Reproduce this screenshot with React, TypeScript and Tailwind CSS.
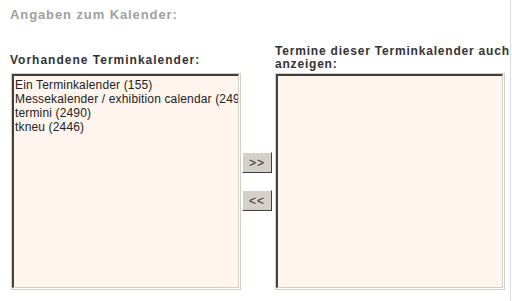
import React from "react";

const font = { fontFamily: '"Liberation Sans", Arial, sans-serif' };

function ListBox({ items }: { items: string[] }) {
  return (
    <div className="h-[217px] w-[230px] border border-[#d4d0c8] bg-white pb-px pr-px">
      <div className="h-full w-full overflow-hidden border-l-2 border-t-2 border-b border-r border-l-[#404040] border-t-[#404040] border-b-[#d4d0c8] border-r-[#d4d0c8] bg-[#fff5ee] pl-px pt-[2px] text-[12px] leading-[14px] tracking-[0.15px] text-[#222]">
        {items.map((t) => (
          <div key={t} className="whitespace-nowrap">
            {t}
          </div>
        ))}
      </div>
    </div>
  );
}

function Btn({ label }: { label: string }) {
  return (
    <div className="flex h-[21px] w-[30px] items-center justify-center border border-t-white border-l-white border-b-[#404040] border-r-[#404040] bg-[#d4d0c8] text-[12px] leading-none tracking-[1px] text-[#333]">
      {label}
    </div>
  );
}

export default function App() {
  return (
    <div className="h-[301px] w-[512px] bg-white" style={font}>
      <div className="h-[301px] w-[511px] overflow-hidden border-r border-[#dcdce6]">
        <div className="pl-[10px] pt-[7px] text-[13px] font-bold leading-[16px] tracking-[0.9px] text-[#a0a0a0]">
          Angaben zum Kalender:
        </div>
        <div className="mt-[5px] flex">
          <div className="flex w-[241px] flex-col">
            <div className="flex h-[45px] items-end pb-[6px] pl-[10px] text-[12px] font-bold leading-[14px] tracking-[1px] text-[#333]">
              Vorhandene Terminkalender:
            </div>
            <div className="pl-[11px]">
              <ListBox
                items={[
                  "Ein Terminkalender (155)",
                  "Messekalender / exhibition calendar (2490)",
                  "termini (2490)",
                  "tkneu (2446)",
                ]}
              />
            </div>
          </div>
          <div className="flex w-[34px] flex-col items-center gap-[17px] pt-[124px] pr-[2px]">
            <Btn label=">>" />
            <Btn label="<<" />
          </div>
          <div className="flex w-[235px] flex-col">
            <div className="flex h-[45px] flex-col justify-end whitespace-nowrap pb-[2px] text-[12px] font-bold leading-[13px] tracking-[0.8px] text-[#333]">
              <span>Termine dieser Terminkalender auch</span>
              <span>anzeigen:</span>
            </div>
            <ListBox items={[]} />
          </div>
        </div>
      </div>
    </div>
  );
}
